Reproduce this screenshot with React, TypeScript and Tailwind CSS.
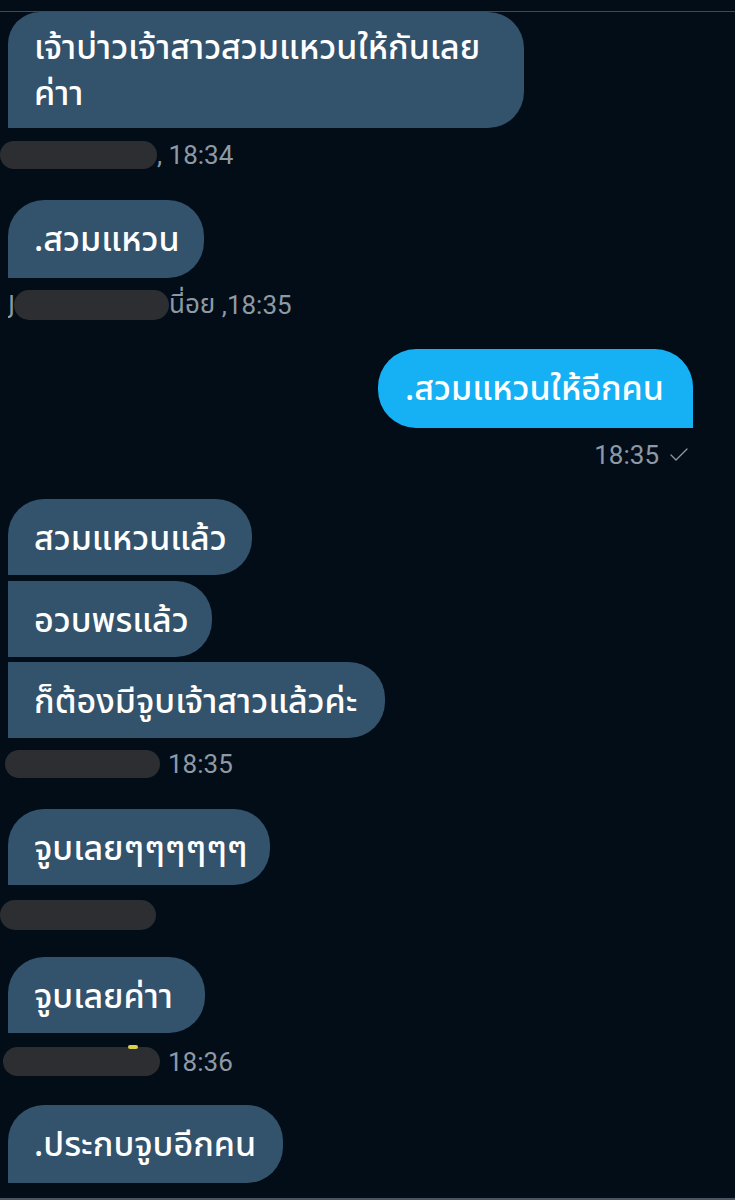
import { Check } from "lucide-react";

const thai = "font-['Noto_Sans_Thai','Noto_Sans','DejaVu_Sans',sans-serif]";

function Bubble({ text, w, className = "" }: { text: React.ReactNode; w: string; className?: string }) {
  return (
    <div
      className={`${w} ${thai} bg-[#33526b] text-white text-[34px] font-medium leading-[46px] pl-[26px] pr-[16px] pt-[18px] pb-[12px] rounded-r-[36px] whitespace-nowrap ${className}`}
    >
      {text}
    </div>
  );
}

function Redacted({ w, className = "" }: { w: string; className?: string }) {
  return <div className={`${w} h-[28px] rounded-full bg-[#2c2e31] shrink-0 ${className}`} />;
}

function Stamp({ children }: { children: React.ReactNode }) {
  return (
    <span className="font-['Roboto','Liberation_Sans',sans-serif] text-[26px] leading-none text-[#8d9aa6] whitespace-nowrap">
      {children}
    </span>
  );
}

export default function App() {
  return (
    <div className="w-[735px] h-[1200px] bg-[#020d18] overflow-hidden flex flex-col relative">
      {/* top divider */}
      <div className="h-[11px] shrink-0" />
      <div className="h-[1px] bg-[#3d4a5c] shrink-0" />

      {/* first message */}
      <div className="pl-[8px]">
        <div
          className={`w-[516px] h-[116px] ${thai} bg-[#33526b] text-white text-[34px] font-medium leading-[46px] pl-[26px] pt-[14px] rounded-tl-[32px] rounded-r-[36px]`}
        >
          เจ้าบ่าวเจ้าสาวสวมแหวนให้กันเลย
          <br />
          ค่าา
        </div>
      </div>
      <div className="flex items-center mt-[13px] h-[28px]">
        <Redacted w="w-[157px]" />
        <Stamp>, 18:34</Stamp>
      </div>

      <div className="pl-[8px] mt-[31px]">
        <Bubble w="w-[196px]" text=".สวมแหวน" className="rounded-tl-[36px] h-[78px]" />
      </div>
      <div className="flex items-center mt-[12px] h-[30px] pl-[8px]">
        <span className={`${thai} text-[26px] text-[#8d9aa6] w-[6px] overflow-hidden`}>J</span>
        <Redacted w="w-[155px]" className="h-[30px]" />
        <span className={`${thai} text-[26px] text-[#8d9aa6] whitespace-nowrap`}>นี่อย</span>
        <Stamp>&nbsp;,18:35</Stamp>
      </div>

      {/* my message */}
      <div className="flex justify-end pr-[42px] mt-[29px]">
        <div
          className={`w-[315px] h-[79px] ${thai} bg-[#16b0f5] text-white text-[34px] font-medium leading-[46px] pl-[27px] pt-[18px] rounded-l-[38px] rounded-tr-[38px] whitespace-nowrap`}
        >
          .สวมแหวนให้อีกคน
        </div>
      </div>
      <div className="flex justify-end items-center pr-[44px] mt-[17px] h-[20px] gap-[8px]">
        <Stamp>18:35</Stamp>
        <Check className="w-[24px] h-[24px] text-[#8d9aa6]" strokeWidth={1.3} />
      </div>

      {/* group */}
      <div className="pl-[8px] mt-[34px] flex flex-col gap-[6px]">
        <Bubble w="w-[244px]" text="สวมแหวนแล้ว" className="rounded-tl-[36px] h-[76px]" />
        <Bubble w="w-[204px]" text="อวบพรแล้ว" className="h-[76px]" />
        <Bubble w="w-[377px]" text="ก็ต้องมีจูบเจ้าสาวแล้วค่ะ" className="h-[76px] -mt-[1px]" />
      </div>
      <div className="flex items-center mt-[12px] h-[28px] pl-[5px] gap-[8px]">
        <Redacted w="w-[155px]" />
        <Stamp>18:35</Stamp>
      </div>

      <div className="pl-[8px] mt-[31px]">
        <Bubble w="w-[262px]" text="จูบเลยๆๆๆๆๆๆ" className="rounded-tl-[36px] h-[76px]" />
      </div>
      <div className="mt-[15px] h-[30px]">
        <Redacted w="w-[156px]" className="h-[30px]" />
      </div>

      <div className="pl-[8px] mt-[27px]">
        <Bubble w="w-[197px]" text="จูบเลยค่าา" className="rounded-tl-[36px] h-[76px]" />
      </div>
      <div className="flex items-center mt-[14px] h-[29px] pl-[3px] gap-[8px] relative">
        <Redacted w="w-[157px]" className="h-[29px]" />
        <Stamp>18:36</Stamp>
        <div className="absolute left-[128px] -top-[2px] w-[10px] h-[4px] rounded-full bg-[#d9d24a]" />
      </div>

      <div className="pl-[8px] mt-[29px]">
        <Bubble w="w-[275px]" text=".ประกบจูบอีกคน" className="rounded-tl-[36px] h-[78px]" />
      </div>

      <div className="absolute left-0 right-0 bottom-0 h-[2px] bg-[#4a5563]" />
    </div>
  );
}
